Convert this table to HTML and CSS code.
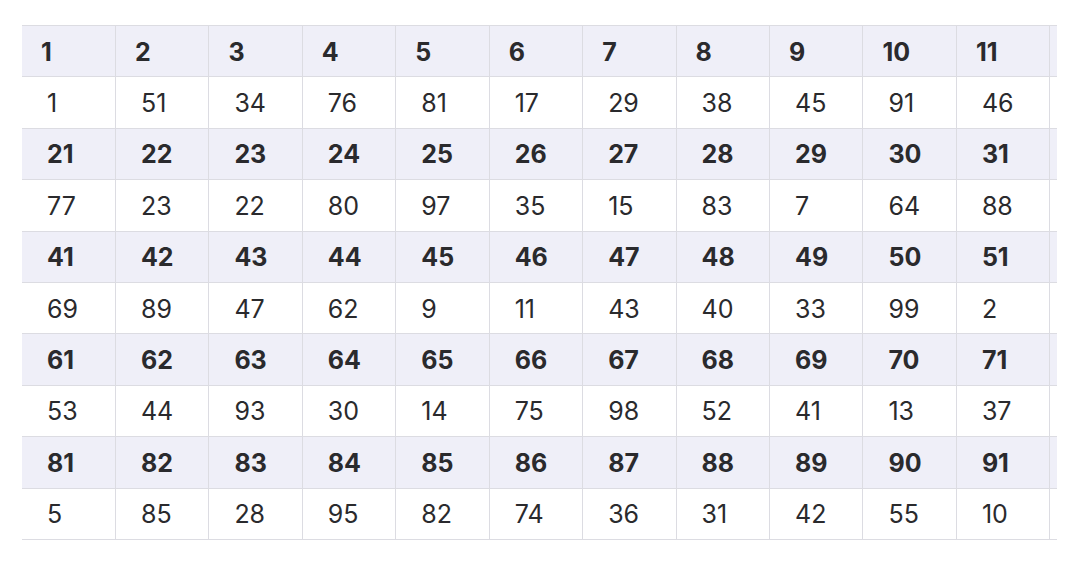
FILE: index.html
```html
<!DOCTYPE html>
<html>
<head>
<meta charset="utf-8">
<link rel="stylesheet" href="styles.css">
</head>
<body>
<div class="wrap">
<table class="grid">
<colgroup><col><col><col><col><col><col><col><col><col><col><col><col></colgroup>
<tbody>
<tr class="head first"><th>1</th><th>2</th><th>3</th><th>4</th><th>5</th><th>6</th><th>7</th><th>8</th><th>9</th><th>10</th><th>11</th><th></th></tr>
<tr><td>1</td><td>51</td><td>34</td><td>76</td><td>81</td><td>17</td><td>29</td><td>38</td><td>45</td><td>91</td><td>46</td><td></td></tr>
<tr class="head"><th>21</th><th>22</th><th>23</th><th>24</th><th>25</th><th>26</th><th>27</th><th>28</th><th>29</th><th>30</th><th>31</th><th></th></tr>
<tr><td>77</td><td>23</td><td>22</td><td>80</td><td>97</td><td>35</td><td>15</td><td>83</td><td>7</td><td>64</td><td>88</td><td></td></tr>
<tr class="head"><th>41</th><th>42</th><th>43</th><th>44</th><th>45</th><th>46</th><th>47</th><th>48</th><th>49</th><th>50</th><th>51</th><th></th></tr>
<tr><td>69</td><td>89</td><td>47</td><td>62</td><td>9</td><td>11</td><td>43</td><td>40</td><td>33</td><td>99</td><td>2</td><td></td></tr>
<tr class="head"><th>61</th><th>62</th><th>63</th><th>64</th><th>65</th><th>66</th><th>67</th><th>68</th><th>69</th><th>70</th><th>71</th><th></th></tr>
<tr><td>53</td><td>44</td><td>93</td><td>30</td><td>14</td><td>75</td><td>98</td><td>52</td><td>41</td><td>13</td><td>37</td><td></td></tr>
<tr class="head"><th>81</th><th>82</th><th>83</th><th>84</th><th>85</th><th>86</th><th>87</th><th>88</th><th>89</th><th>90</th><th>91</th><th></th></tr>
<tr><td>5</td><td>85</td><td>28</td><td>95</td><td>82</td><td>74</td><td>36</td><td>31</td><td>42</td><td>55</td><td>10</td><td></td></tr>
</tbody>
</table>
</div>
</body>
</html>
```
FILE: styles.css
```css
html, body {
  margin: 0;
  padding: 0;
  background: #ffffff;
}
body {
  font-family: "Inter", "Liberation Sans", sans-serif;
  color: #2a2a2d;
}
.wrap {
  margin: 25px 0 0 22px;
  width: 1035px;
  overflow: hidden;
}
.grid {
  border-collapse: collapse;
  table-layout: fixed;
  width: 1121.4px;
}
.grid col {
  width: 93.45px;
}
.grid th, .grid td {
  height: 48.4px;
  padding: 2px 0 0 25px;
  text-align: left;
  vertical-align: middle;
  border: 1px solid #dcdce2;
  font-size: 25px;
  line-height: 1;
  white-space: nowrap;
  overflow: hidden;
}
.grid th:first-child, .grid td:first-child {
  border-left: none;
}
.grid th {
  font-weight: 700;
  background: #efeff8;
}
.grid td {
  font-weight: 400;
}
.grid .first th {
  padding-left: 19px;
}
```
